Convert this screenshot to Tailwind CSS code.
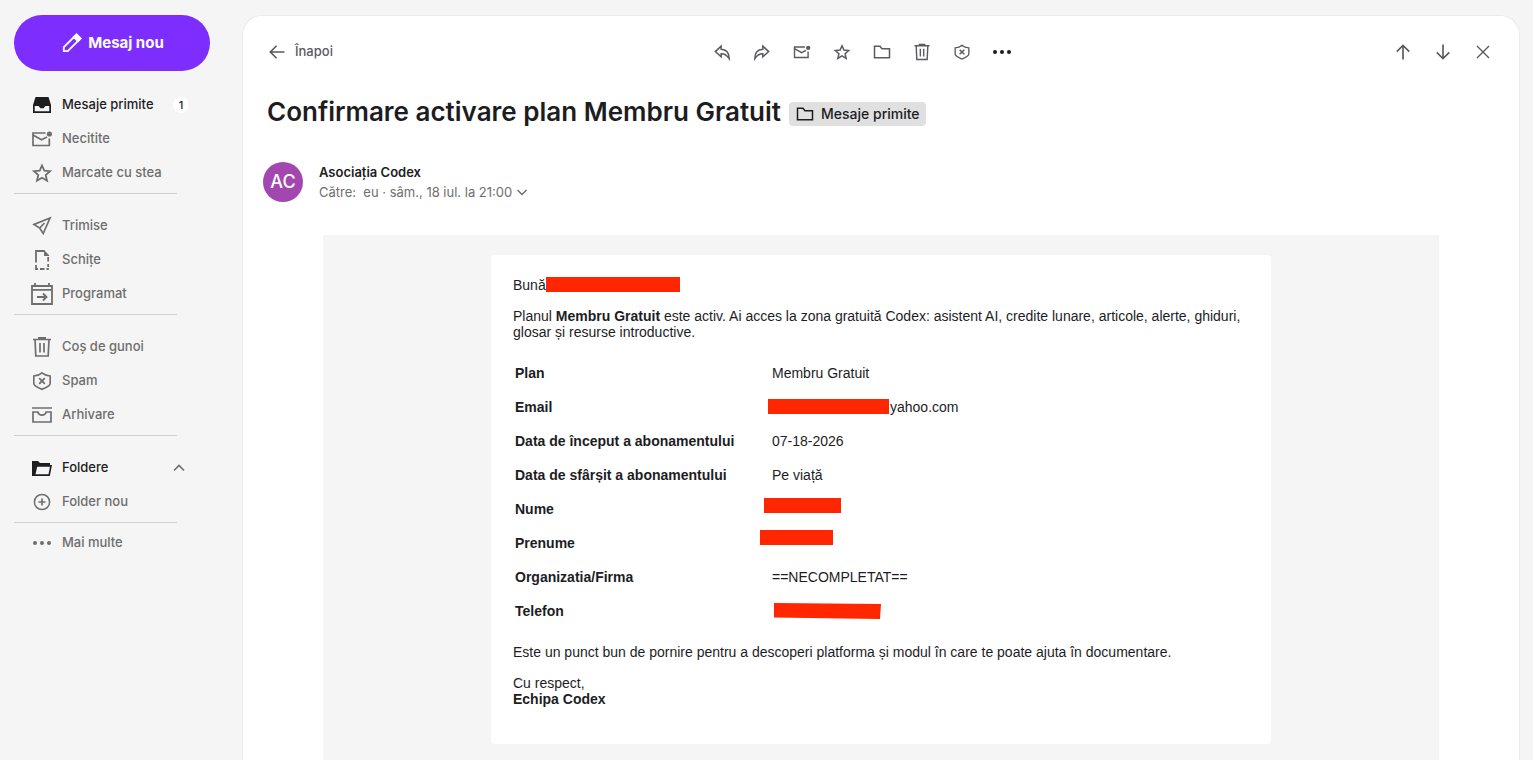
<!DOCTYPE html>
<html lang="ro">

<head>
    <meta charset="UTF-8">
    <meta name="viewport" content="width=device-width, initial-scale=1.0">
    <title>Confirmare activare plan Membru Gratuit</title>
    <script src="https://cdn.jsdelivr.net/npm/@tailwindcss/browser@4"></script>
</head>

<body class="bg-[#f5f5f5] font-[Inter,sans-serif] text-[#1d1d1f]">
    <!-- icon set -->
    <svg class="hidden" xmlns="http://www.w3.org/2000/svg">
        <symbol id="unread" viewBox="0 0 24 24">
            <path d="M15.500 6H3v12.500h16.300V11.500M3 8l8.500 4.800 5.500-2.800" fill="none" stroke="currentColor" stroke-width="1.700" />
            <circle cx="19.400" cy="7" r="2.600" fill="currentColor" />
        </symbol>
        <symbol id="star" viewBox="0 0 24 24">
            <path d="M12 4.500l2.300 5.200 5.700.500-4.300 3.800 1.300 5.700-5-3-5 3 1.300-5.700L4 10.200l5.700-.500z" fill="none" stroke="currentColor" stroke-width="1.800" />
        </symbol>
        <symbol id="trash" viewBox="0 0 24 24">
            <path d="M3 4.500h18M8 2.800h8M5 4.500l.800 16.500h12.400L19 4.500M10 8v9.500M14 8v9.500" fill="none" stroke="currentColor" stroke-width="1.700" />
        </symbol>
        <symbol id="shield" viewBox="0 0 24 24">
            <path d="M12 3.800c2 1.800 4.600 2.900 8.200 3.200v7.500c0 2.600-4.400 4.200-8.200 5.900-3.800-1.700-8.200-3.300-8.200-5.900V7c3.600-.3 6.200-1.400 8.200-3.200z" fill="none" stroke="currentColor" stroke-width="1.600" />
            <path d="M9.200 9.200l5.600 5.600M14.800 9.200l-5.600 5.600" fill="none" stroke="currentColor" stroke-width="1.800" />
        </symbol>
        <symbol id="reply" viewBox="0 0 24 24">
            <path d="M11 5L4 11.500l7 6.200V14c4.300-.2 7 1.800 9.600 6C20.600 12.500 17 9 11 8.800z" fill="none" stroke="currentColor" stroke-width="1.800" />
        </symbol>
        <symbol id="folder" viewBox="0 0 24 24">
            <path d="M3 5h6.500l2.500 3h9v11H3z" fill="none" stroke="currentColor" stroke-width="1.800" />
        </symbol>
        <symbol id="dots" viewBox="0 0 24 24">
            <circle cx="5" cy="12" r="2" fill="currentColor" />
            <circle cx="12" cy="12" r="2" fill="currentColor" />
            <circle cx="19" cy="12" r="2" fill="currentColor" />
        </symbol>
        <symbol id="arrow" viewBox="0 0 24 24">
            <path d="M12 21V4M4.500 11.500L12 4l7.500 7.500" fill="none" stroke="currentColor" stroke-width="2" />
        </symbol>
    </svg>

    <div class="flex h-screen overflow-hidden">
        <aside class="w-[242px] shrink-0 pt-[15px] pl-[14px] text-[13px] font-medium text-[#6e6e6e]">
            <button class="flex h-14 w-[196px] items-center justify-center gap-1 rounded-full bg-[#7d2eff] text-[15px] font-bold text-white">
                <svg class="size-6" viewBox="0 0 24 24">
                    <path d="M3.800 20.200v-4L14.500 5.500l4 4L7.800 20.200z" fill="none" stroke="currentColor" stroke-width="1.800" />
                    <path d="M12.500 6L16.500 2 22 7.500 18 11.500z" fill="currentColor" />
                </svg>
                Mesaj nou
            </button>

            <nav class="mt-[17px] w-[163px]">
                <ul class="border-b border-[#cfcfcf] pb-[3px]">
                    <li>
                        <a href="#" class="flex h-[34px] w-[175px] items-center gap-2 pl-4 text-[#1d1d1f]">
                            <svg class="size-6" viewBox="0 0 24 24">
                                <path fill-rule="evenodd" d="M5.500 4h13L21 12v8H3v-8zM4.700 13v5.200h14.600V13h-3.800l-2 2.300h-3l-2-2.300z" fill="currentColor" />
                            </svg>
                            Mesaje primite
                            <span class="ml-auto flex size-4 items-center justify-center rounded-full bg-white text-[11px]">1</span>
                        </a>
                    </li>
                    <li>
                        <a href="#" class="flex h-[34px] items-center gap-2 pl-4">
                            <svg class="size-6"><use href="#unread" /></svg>
                            Necitite
                        </a>
                    </li>
                    <li>
                        <a href="#" class="flex h-[34px] items-center gap-2 pl-4">
                            <svg class="size-6"><use href="#star" /></svg>
                            Marcate cu stea
                        </a>
                    </li>
                </ul>
                <ul class="mt-[15px] border-b border-[#cfcfcf] pb-[3px]">
                    <li>
                        <a href="#" class="flex h-[34px] items-center gap-2 pl-4">
                            <svg class="size-6" viewBox="0 0 24 24">
                                <path d="M20 4L4 10.500l5.700 3.500L13.200 19.500zM9.700 14l4.800-5" fill="none" stroke="currentColor" stroke-width="1.700" />
                            </svg>
                            Trimise
                        </a>
                    </li>
                    <li>
                        <a href="#" class="flex h-[34px] items-center gap-2 pl-4">
                            <svg class="size-6" viewBox="0 0 24 24">
                                <path d="M6 14.500V3h8.500M6 17v4h2M10 21h4.500M16.500 21h2.300M18.200 9v4.500M18.200 16v3" fill="none" stroke="currentColor" stroke-width="1.800" />
                                <path d="M14 2l5.200 5.200V8H14z" fill="currentColor" />
                            </svg>
                            Schițe
                        </a>
                    </li>
                    <li>
                        <a href="#" class="flex h-[34px] items-center gap-2 pl-4">
                            <svg class="size-6" viewBox="0 0 24 24">
                                <path d="M2 4h20v18H2zM2 7.800h20M5 1v3M19 1v3" fill="none" stroke="currentColor" stroke-width="1.800" />
                                <path d="M7 15h9M13 11.500l3.500 3.500-3.500 3.500" fill="none" stroke="currentColor" stroke-width="1.800" />
                            </svg>
                            Programat
                        </a>
                    </li>
                </ul>
                <ul class="mt-[15px] border-b border-[#cfcfcf] pb-[3px]">
                    <li>
                        <a href="#" class="flex h-[34px] items-center gap-2 pl-4">
                            <svg class="size-6"><use href="#trash" /></svg>
                            Coș de gunoi
                        </a>
                    </li>
                    <li>
                        <a href="#" class="flex h-[34px] items-center gap-2 pl-4">
                            <svg class="size-6"><use href="#shield" /></svg>
                            Spam
                        </a>
                    </li>
                    <li>
                        <a href="#" class="flex h-[34px] items-center gap-2 pl-4">
                            <svg class="size-6" viewBox="0 0 24 24">
                                <path d="M2 5h20M3 9h4.800c.6 2 2 3.200 4.200 3.200S15.600 11 16.200 9H21v10H3z" fill="none" stroke="currentColor" stroke-width="1.700" />
                            </svg>
                            Arhivare
                        </a>
                    </li>
                </ul>
                <ul class="mt-[15px] border-b border-[#cfcfcf] pb-[3px]">
                    <li class="flex h-[34px] w-[175px] items-center justify-between text-[#1d1d1f]">
                        <a href="#" class="flex items-center gap-2 pl-4">
                            <svg class="size-6" viewBox="0 0 24 24">
                                <path fill-rule="evenodd" d="M2 5h6l2 2h10v2h2l-2.200 11H2zM7.200 10.700L5.500 18.300h13l1.500-7.600z" fill="currentColor" />
                            </svg>
                            Foldere
                        </a>
                        <button aria-label="Restrânge folderele">
                            <svg class="size-5 text-[#6e6e6e]" viewBox="0 0 20 20">
                                <path d="M5 12.500l5-5 5 5" fill="none" stroke="currentColor" stroke-width="1.600" />
                            </svg>
                        </button>
                    </li>
                    <li>
                        <a href="#" class="flex h-[34px] items-center gap-2 pl-4">
                            <svg class="size-6" viewBox="0 0 24 24">
                                <path d="M12 8.500v7M8.500 12h7" stroke="currentColor" stroke-width="1.700" />
                                <circle cx="12" cy="12" r="7.600" fill="none" stroke="currentColor" stroke-width="1.500" />
                            </svg>
                            Folder nou
                        </a>
                    </li>
                </ul>
                <a href="#" class="mt-[3px] flex h-[34px] items-center gap-2 pl-4">
                    <svg class="size-6"><use href="#dots" /></svg>
                    Mai multe
                </a>
            </nav>
        </aside>

        <main class="mt-[15px] mr-[13px] min-w-0 flex-1 rounded-t-[20px] border border-b-0 border-[#ebebeb] bg-white">
            <div class="mt-4 flex h-10 items-center justify-between pr-4 pl-5 text-[#5b5b5f]">
                <button class="flex w-[78px] items-center gap-2 px-1 text-[13px] font-medium">
                    <svg class="size-5 -rotate-90"><use href="#arrow" /></svg>
                    Înapoi
                </button>
                <div class="flex">
                    <button class="flex size-10 items-center justify-center" aria-label="Răspunde">
                        <svg class="size-5"><use href="#reply" /></svg>
                    </button>
                    <button class="flex size-10 items-center justify-center" aria-label="Redirecționează">
                        <svg class="size-5 -scale-x-100"><use href="#reply" /></svg>
                    </button>
                    <button class="flex size-10 items-center justify-center" aria-label="Marchează ca necitit">
                        <svg class="size-5"><use href="#unread" /></svg>
                    </button>
                    <button class="flex size-10 items-center justify-center" aria-label="Marchează cu stea">
                        <svg class="size-5"><use href="#star" /></svg>
                    </button>
                    <button class="flex size-10 items-center justify-center" aria-label="Mută">
                        <svg class="size-5"><use href="#folder" /></svg>
                    </button>
                    <button class="flex size-10 items-center justify-center" aria-label="Șterge">
                        <svg class="size-5"><use href="#trash" /></svg>
                    </button>
                    <button class="flex size-10 items-center justify-center" aria-label="Spam">
                        <svg class="size-5"><use href="#shield" /></svg>
                    </button>
                    <button class="flex size-10 items-center justify-center text-[#1d1d1f]" aria-label="Mai multe opțiuni">
                        <svg class="size-6"><use href="#dots" /></svg>
                    </button>
                </div>
                <div class="flex">
                    <button class="flex size-10 items-center justify-center" aria-label="Mesajul anterior">
                        <svg class="size-5"><use href="#arrow" /></svg>
                    </button>
                    <button class="flex size-10 items-center justify-center" aria-label="Mesajul următor">
                        <svg class="size-5 rotate-180"><use href="#arrow" /></svg>
                    </button>
                    <button class="flex size-10 items-center justify-center" aria-label="Închide">
                        <svg class="size-5" viewBox="0 0 20 20">
                            <path d="M4 4l12 12M16 4L4 16" stroke="currentColor" stroke-width="1.400" />
                        </svg>
                    </button>
                </div>
            </div>

            <header class="mt-5 flex h-10 items-center gap-2 pl-6">
                <h1 class="text-[26px] leading-10 font-semibold">Confirmare activare plan Membru Gratuit</h1>
                <a href="#" class="mt-1 flex h-6 items-center gap-[6px] rounded-sm bg-[#e0e0e0] px-[6px] text-sm font-medium">
                    <svg class="size-5"><use href="#folder" /></svg>
                    Mesaje primite
                </a>
            </header>

            <div class="mt-[30px] flex gap-4 pl-5">
                <div class="flex size-10 items-center justify-center rounded-full bg-[#a347b0] text-lg font-medium text-white">AC</div>
                <div class="text-[13px] leading-5">
                    <p class="font-semibold">Asociația Codex</p>
                    <button class="flex items-center text-[#6e6e6e]">
                        Către:&nbsp; eu · sâm., 18 iul. la 21:00
                        <svg class="size-5" viewBox="0 0 20 20">
                            <path d="M5.500 8l4.500 4.500L14.500 8" fill="none" stroke="currentColor" stroke-width="1.500" />
                        </svg>
                    </button>
                </div>
            </div>

            <!-- message body -->
            <div class="mx-20 mt-[33px] bg-[#f5f5f5] py-5 font-[Liberation_Sans,sans-serif] text-sm leading-4">
                <article class="mx-auto max-w-[780px] rounded-sm bg-white px-[22px] pt-[22px] pb-[37px]">
                    <p class="flex items-start">Bună<span class="h-[15px] w-[134px] bg-[#ff2600]"></span></p>
                    <p class="mt-[15px]">Planul <b>Membru Gratuit</b> este activ. Ai acces la zona gratuită Codex: asistent AI, credite lunare, articole, alerte, ghiduri, glosar și resurse introductive.</p>
                    <table class="mt-4 w-full text-left">
                        <tbody>
                            <tr class="h-[34px]">
                                <th class="w-[259px] pl-[2px]">Plan</th>
                                <td>Membru Gratuit</td>
                            </tr>
                            <tr class="h-[34px]">
                                <th class="pl-[2px]">Email</th>
                                <td><span class="-ml-1 flex items-start gap-px"><span class="h-[15px] w-[121px] bg-[#ff2600]"></span>yahoo.com</span></td>
                            </tr>
                            <tr class="h-[34px]">
                                <th class="pl-[2px]">Data de început a abonamentului</th>
                                <td>07-18-2026</td>
                            </tr>
                            <tr class="h-[34px]">
                                <th class="pl-[2px]">Data de sfârșit a abonamentului</th>
                                <td>Pe viață</td>
                            </tr>
                            <tr class="h-[34px]">
                                <th class="pl-[2px]">Nume</th>
                                <td class="relative"><span class="absolute top-[6px] -left-2 h-[15px] w-[77px] bg-[#ff2600]"></span></td>
                            </tr>
                            <tr class="h-[34px]">
                                <th class="pl-[2px]">Prenume</th>
                                <td class="relative"><span class="absolute top-1 -left-3 h-[15px] w-[73px] bg-[#ff2600]"></span></td>
                            </tr>
                            <tr class="h-[34px]">
                                <th class="pl-[2px]">Organizatia/Firma</th>
                                <td>==NECOMPLETAT==</td>
                            </tr>
                            <tr class="h-[34px]">
                                <th class="pl-[2px]">Telefon</th>
                                <td class="relative">
                                    <svg class="absolute top-[9px] left-[2px] h-4 w-[107px]" viewBox="0 0 107 16">
                                        <path d="M0 0l107 1-1 15L0 14.500z" fill="#ff2600" />
                                    </svg>
                                </td>
                            </tr>
                        </tbody>
                    </table>
                    <p class="mt-4">Este un punct bun de pornire pentru a descoperi platforma și modul în care te poate ajuta în documentare.</p>
                    <p class="mt-[15px]">Cu respect,<br><b>Echipa Codex</b></p>
                </article>
            </div>
        </main>
    </div>
</body>

</html>
